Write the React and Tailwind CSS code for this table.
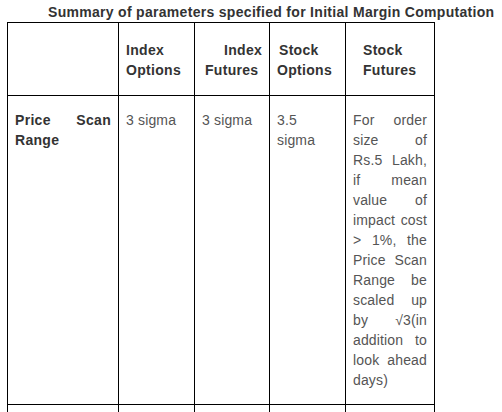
const J = "block [text-align-last:justify]";

export default function App() {
  const th = "border border-black align-top p-0 pt-[17px] pb-[15px] font-bold text-[#333] text-left tracking-[0.3px]";
  const td = "border border-black align-top px-[7px] pt-[14px] pb-[14px] text-[#555] text-left tracking-[0.15px]";
  const col5 = [
    "For order",
    "size of",
    "Rs.5 Lakh,",
    "if mean",
    "value of",
    "impact cost",
    "> 1%, the",
    "Price Scan",
    "Range be",
    "scaled up",
    "by √3(in",
    "addition to",
    "look ahead",
  ];
  return (
    <div className="bg-white w-[502px] h-[412px] overflow-hidden font-['Liberation_Sans',Arial,sans-serif] text-[14px] leading-[20px]">
      <div className="h-[22px] pt-[2px] pl-[48px] whitespace-nowrap font-bold text-[#333] tracking-[0.3px]">
        Summary of parameters specified for Initial Margin Computation
      </div>
      <table className="ml-[7px] w-[427px] table-fixed border-collapse">
        <colgroup>
          <col className="w-[111px]" />
          <col className="w-[76px]" />
          <col className="w-[75px]" />
          <col className="w-[76px]" />
          <col className="w-[89px]" />
        </colgroup>
        <thead>
          <tr>
            <th className={th}></th>
            <th className={th}>
              <span className="block pl-[7px]">Index</span>
              <span className="block pl-[7px]">Options</span>
            </th>
            <th className={th}>
              <span className="block pl-[29px]">Index</span>
              <span className="block pl-[10px]">Futures</span>
            </th>
            <th className={th}>
              <span className="block pl-[9px]">Stock</span>
              <span className="block pl-[7px]">Options</span>
            </th>
            <th className={th}>
              <span className="block pl-[17px]">Stock</span>
              <span className="block pl-[17px]">Futures</span>
            </th>
          </tr>
        </thead>
        <tbody>
          <tr>
            <td className={td + " font-bold !text-[#333] !tracking-[0.3px]"}>
              <span className={J}>Price Scan</span>
              <span className="block">Range</span>
            </td>
            <td className={td}>3 sigma</td>
            <td className={td}>3 sigma</td>
            <td className={td}>
              <span className="block">3.5</span>
              <span className="block">sigma</span>
            </td>
            <td className={td}>
              {col5.map((l) => (
                <span key={l} className={J}>{l}</span>
              ))}
              <span className="block">days)</span>
            </td>
          </tr>
          <tr>
            <td className={td}>&nbsp;</td>
            <td className={td}>&nbsp;</td>
            <td className={td}>&nbsp;</td>
            <td className={td}>&nbsp;</td>
            <td className={td}>&nbsp;</td>
          </tr>
        </tbody>
      </table>
    </div>
  );
}
